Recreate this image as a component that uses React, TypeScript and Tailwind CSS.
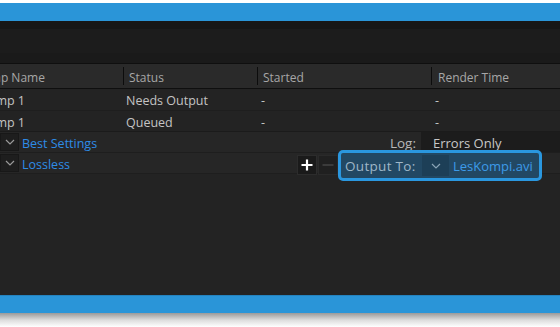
import React from "react";

const font = { fontFamily: '"Open Sans", "Noto Sans", sans-serif' };

function Chevron({ className = "" }: { className?: string }) {
  return (
    <svg width="10" height="6" viewBox="0 0 10 6" className={className}>
      <path d="M1 1 L5 5 L9 1" fill="none" stroke="currentColor" strokeWidth="1.2" />
    </svg>
  );
}

export default function App() {
  return (
    <div
      className="relative w-[560px] h-[327px] bg-white flex flex-col overflow-hidden text-[12.5px]"
      style={font}
    >
      <div className="h-[3px] bg-white" />
      <div className="h-[18px] bg-[#2a95d8]" />
      <div className="h-[8px] bg-[#171717]" />
      <div className="h-[24px] bg-[#1c1c1c]" />
      <div className="h-[10px] bg-[#1a1a1a]" />
      <div className="flex-1 flex flex-col bg-[#232323]">
        {/* header */}
        <div className="h-[26px] flex items-center bg-[#2a2a2a] border-t border-b border-[#0f0f0f] text-[#a7a7a7] text-[12px]">
          <div className="w-[123px] pt-[4px] overflow-hidden whitespace-nowrap">
            <span className="ml-[-25px]">Comp Name</span>
          </div>
          <div className="w-px h-[18px] bg-[#0c0c0c]" />
          <div className="w-[133px] pt-[4px] pl-[5px]">Status</div>
          <div className="w-px h-[18px] bg-[#0c0c0c]" />
          <div className="w-[173px] pt-[4px] pl-[5px]">Started</div>
          <div className="w-px h-[18px] bg-[#0c0c0c]" />
          <div className="flex-1 pt-[4px] pl-[6px]">Render Time</div>
        </div>
        {/* rows */}
        <div className="h-[22px] flex items-center text-[#c4c4c4] border-b border-[#1e1e1e]">
          <div className="w-[126px] pt-[4px] overflow-hidden whitespace-nowrap">
            <span className="ml-[-20px]">Comp 1</span>
          </div>
          <div className="w-[135px] pt-[4px]">Needs Output</div>
          <div className="w-[174px] pt-[4px]">-</div>
          <div className="flex-1 pt-[4px]">-</div>
        </div>
        <div className="h-[21px] flex items-center text-[#c4c4c4] border-b border-[#1b1b1b]">
          <div className="w-[126px] pt-[4px] overflow-hidden whitespace-nowrap">
            <span className="ml-[-20px]">Comp 1</span>
          </div>
          <div className="w-[135px] pt-[4px]">Queued</div>
          <div className="w-[174px] pt-[4px]">-</div>
          <div className="flex-1 pt-[4px]">-</div>
        </div>
        <div className="h-[21px] flex items-center bg-[#262626] border-b border-[#1e1e1e]">
          <div className="w-[19px] h-[18px] flex items-center justify-center bg-[#1e1e1e] border border-[#181818] text-[#9a9a9a]">
            <Chevron />
          </div>
          <div className="w-[368px] pt-[4px] pl-[3px] text-[#2e8ce6]">Best Settings</div>
          <div className="w-[29px] pt-[3px] text-right text-[#b8b8b8] text-[13.5px]">Log:</div>
          <div className="ml-[5px] flex-1 h-[20px] flex items-center pt-[3px] pl-[12px] bg-[#1c1c1c] text-[#c8c8c8] text-[13px]">
            Errors Only
          </div>
        </div>
        <div className="h-[21px] flex items-start bg-[#262626] border-b border-[#1e1e1e]">
          <div className="mt-[1px] w-[19px] h-[18px] flex items-center justify-center bg-[#1e1e1e] border border-[#181818] text-[#9a9a9a]">
            <Chevron />
          </div>
          <div className="w-[278px] pl-[3px] pt-[4px] h-[20px] flex items-center text-[#2e8ce6]">Lossless</div>
          <div className="mt-[2px] w-[20px] h-[20px] flex items-center justify-center bg-[#1a1a1a] border border-[#2c2c2c] text-white">
            <svg width="12" height="12" viewBox="0 0 12 12">
              <path d="M6 0.5 V11.5 M0.5 6 H11.5" stroke="currentColor" strokeWidth="2.2" />
            </svg>
          </div>
          <div className="mt-[2px] w-[20px] h-[20px] ml-px flex items-center justify-center bg-[#202020] border border-[#2a2a2a] text-[#444]">
            <svg width="12" height="12" viewBox="0 0 12 12">
              <path d="M0.5 6 H11.5" stroke="currentColor" strokeWidth="1.5" />
            </svg>
          </div>
        </div>
        <div className="flex-1" />
      </div>
      <div className="h-[18px] bg-[#2a95d8] border-t border-[#2483bf]" />
      <div className="h-[14px] bg-gradient-to-b from-[#9a9a9a] via-[#dcdcdc] to-white" />

      {/* highlight annotation */}
      <div className="absolute left-[338px] top-[150px] w-[204px] h-[31px] rounded-[5px] border-[3px] border-[#2a97df] bg-[#224863] flex items-center">
        <div className="pl-[4px] pt-[2px] w-[81px] text-[#9fb7c8] text-[13.5px] tracking-[0.3px]">Output To:</div>
        <div className="w-[27px] h-[21px] flex items-center justify-center bg-[#1d3f57] text-[#8aa4b6]">
          <Chevron />
        </div>
        <div className="pl-[4px] pt-[2px] text-[#3d9be9] text-[13px]">LesKompi.avi</div>
      </div>
    </div>
  );
}
